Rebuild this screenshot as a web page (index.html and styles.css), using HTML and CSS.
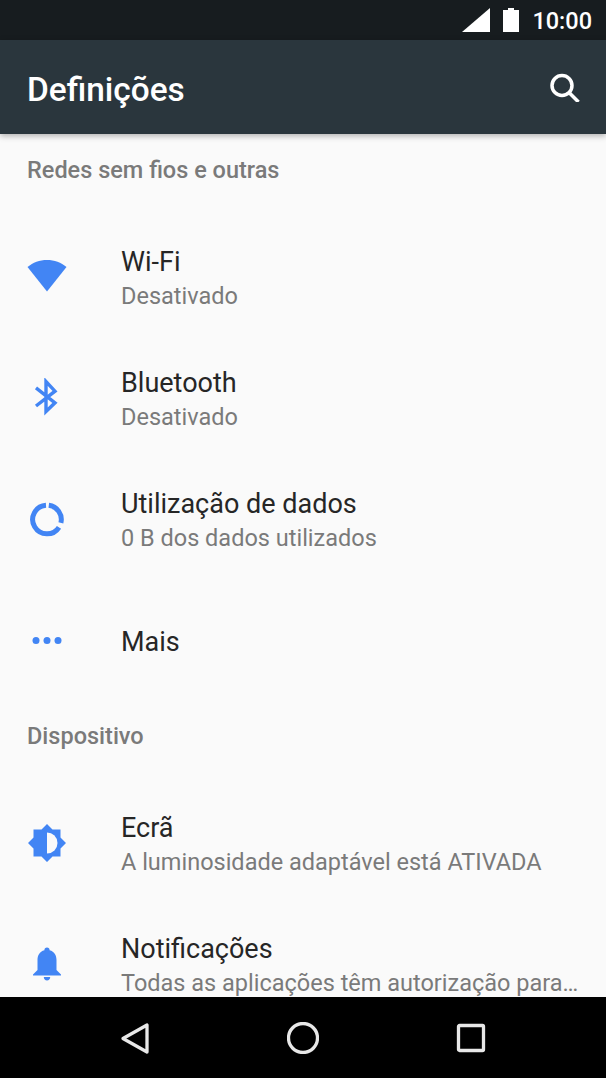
FILE: index.html
```html
<!DOCTYPE html>
<html lang="pt">
<head>
    <meta charset="UTF-8">
    <meta name="viewport" content="width=device-width, initial-scale=1.0">
    <title>Definições</title>
    <link rel="stylesheet" href="styles.css">
</head>
<body>
<div class="phone">
    <div class="status-bar">
        <svg class="signal" viewBox="0 0 28 24"><path d="M28 0V24H0Z"/></svg>
        <svg class="battery" viewBox="0 0 16 24"><path d="M5 0H11V2H16V24H0V2H5Z"/></svg>
        <span class="clock">10:00</span>
    </div>

    <header class="app-bar">
        <h1>Definições</h1>
        <svg class="search" viewBox="0 0 30 30"><circle cx="12" cy="13.500" r="10"/><path d="M19 20.500L28.500 30"/></svg>
    </header>

    <main class="list">
        <h2 class="section">Redes sem fios e outras</h2>

        <div class="row">
            <div class="icon">
                <svg viewBox="0 0 40 40"><path d="M20 34.500L.5 10C6 5.500 12.500 3 20 3S34 5.500 39.500 10Z"/></svg>
            </div>
            <div class="text">
                <div class="title">Wi-Fi</div>
                <div class="sub">Desativado</div>
            </div>
        </div>

        <div class="row">
            <div class="icon">
                <svg viewBox="0 0 40 40"><path class="line" d="M9 9.800L28 24.800L19 33.500V3.500L28 13.200L9 28"/></svg>
            </div>
            <div class="text">
                <div class="title">Bluetooth</div>
                <div class="sub">Desativado</div>
            </div>
        </div>

        <div class="row">
            <div class="icon">
                <svg viewBox="0 0 40 40">
                    <path class="ring" d="M19 6.300A14.300 14.300 0 1 0 32 28.300"/>
                    <path class="ring" d="M21.800 6.300A14.300 14.300 0 0 1 33.900 23.800"/>
                </svg>
            </div>
            <div class="text">
                <div class="title">Utilização de dados</div>
                <div class="sub">0 B dos dados utilizados</div>
            </div>
        </div>

        <div class="row">
            <div class="icon">
                <svg viewBox="0 0 40 40"><circle cx="9" cy="20.500" r="3.500"/><circle cx="20" cy="20.500" r="3.500"/><circle cx="31" cy="20.500" r="3.500"/></svg>
            </div>
            <div class="text">
                <div class="title">Mais</div>
            </div>
        </div>

        <h2 class="section">Dispositivo</h2>

        <div class="row">
            <div class="icon">
                <svg viewBox="0 0 40 40">
                    <path d="M20 1L25.500 6.500H33.500V14.500L39 20L33.500 25.500V33.500H25.500L20 39L14.500 33.500H6.500V25.500L1 20L6.500 14.500V6.500H14.500Z"/>
                    <path class="cut" d="M20 9.500A10.500 10.500 0 0 1 20 30.500Z"/>
                </svg>
            </div>
            <div class="text">
                <div class="title">Ecrã</div>
                <div class="sub">A luminosidade adaptável está ATIVADA</div>
            </div>
        </div>

        <div class="row">
            <div class="icon">
                <svg viewBox="0 0 40 40">
                    <path d="M20 3.500C21.600 3.500 22.600 4.600 22.600 6.200C27.500 7.500 29.500 11.500 29.500 16V26L34 30.500V31.500H6V30.500L10.500 26V16C10.500 11.500 12.500 7.500 17.400 6.200C17.400 4.600 18.400 3.500 20 3.500Z"/>
                    <path d="M16.800 33H23.200C23.200 35 21.800 36.500 20 36.500S16.800 35 16.800 33Z"/>
                </svg>
            </div>
            <div class="text">
                <div class="title">Notificações</div>
                <div class="sub">Todas as aplicações têm autorização para…</div>
            </div>
        </div>
    </main>

    <nav class="nav-bar">
        <svg viewBox="0 0 32 32"><path d="M28 3V30L4 16.500Z"/></svg>
        <svg viewBox="0 0 32 32"><circle cx="16" cy="16" r="14.500"/></svg>
        <svg viewBox="0 0 32 32"><rect x="3.500" y="3.500" width="25" height="25" rx="1"/></svg>
    </nav>
</div>
</body>
</html>
```

FILE: styles.css
```css
* {
    box-sizing: border-box;
}

body {
    margin: 0;
    font-family: 'Roboto', sans-serif;
    background-color: #fafafa;
}

.phone {
    display: flex;
    flex-direction: column;
    width: 606px;
    height: 1078px;
    overflow: hidden;
}

.status-bar {
    display: flex;
    align-items: center;
    justify-content: flex-end;
    flex: none;
    height: 40px;
    padding: 0 14px 0 0;
    background-color: #171c1f;
    color: #ffffff;
}

.signal {
    width: 28px;
    height: 24px;
    fill: #ffffff;
}

.battery {
    width: 16px;
    height: 24px;
    margin-left: 13px;
    fill: #ffffff;
}

.clock {
    margin-left: 13px;
    padding-top: 2px;
    font-size: 23.500px;
    font-weight: 500;
}

.app-bar {
    position: relative;
    z-index: 1;
    display: flex;
    align-items: center;
    justify-content: space-between;
    flex: none;
    height: 94px;
    padding: 0 26px 0 27px;
    background-color: #2a363d;
    box-shadow: 0 2px 6px rgba(0, 0, 0, 0.3);
}

.app-bar h1 {
    margin: 0;
    padding-top: 4px;
    color: #ffffff;
    font-size: 33.400px;
    font-weight: 500;
}

.search {
    width: 30px;
    height: 30px;
    fill: none;
    stroke: #ffffff;
    stroke-width: 3.500;
}

.list {
    flex: 1;
    overflow: hidden;
    background-color: #fafafa;
}

.section {
    height: 82px;
    margin: 0;
    padding: 22px 27px 0;
    color: #7a7a7a;
    font-size: 23.500px;
    font-weight: 500;
}

.row {
    display: flex;
    align-items: center;
    height: 121px;
}

.icon {
    display: flex;
    justify-content: center;
    flex: none;
    width: 94px;
}

.icon svg {
    width: 40px;
    height: 40px;
    fill: #4285f4;
}

.icon .line,
.icon .ring {
    fill: none;
    stroke: #4285f4;
}

.icon .line {
    stroke-width: 3.400;
}

.icon .ring {
    stroke-width: 5;
}

.icon .cut {
    fill: #fafafa;
}

.text {
    flex: 1;
    min-width: 0;
    padding: 4px 20px 0 27px;
}

.title {
    color: #262626;
    font-size: 27px;
    line-height: 34px;
}

.sub {
    color: #7a7a7a;
    font-size: 23.500px;
    line-height: 34px;
    white-space: nowrap;
}

.nav-bar {
    display: flex;
    align-items: center;
    justify-content: space-between;
    flex: none;
    height: 81px;
    padding: 0 119px;
    background-color: #000000;
}

.nav-bar svg {
    height: 32px;
    width: 32px;
    fill: none;
    stroke: #e8e8e8;
    stroke-width: 3.300;
    stroke-linejoin: round;
}
```
